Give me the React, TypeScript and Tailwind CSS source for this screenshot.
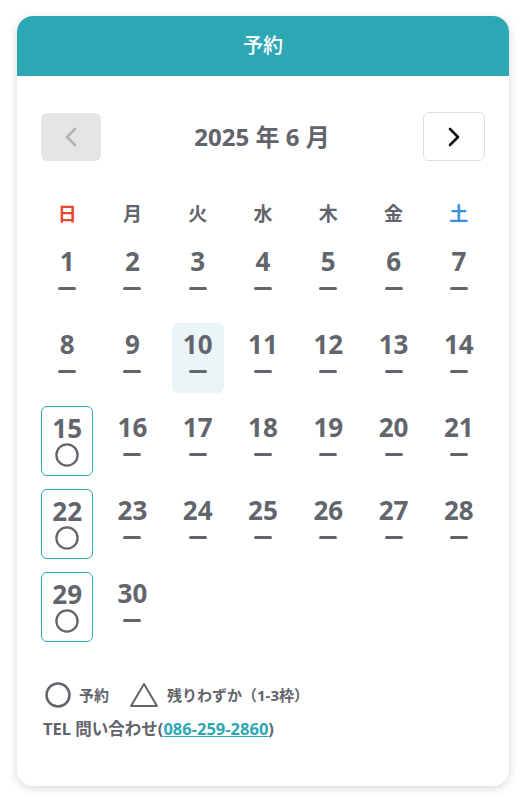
import React from 'react';

const weekdays = [
  { label: '日', color: 'text-[#e8472f]' },
  { label: '月', color: 'text-[#62646b]' },
  { label: '火', color: 'text-[#62646b]' },
  { label: '水', color: 'text-[#62646b]' },
  { label: '木', color: 'text-[#62646b]' },
  { label: '金', color: 'text-[#62646b]' },
  { label: '土', color: 'text-[#3a8fe0]' },
];

// June 2025 starts on Sunday
const days = Array.from({ length: 30 }, (_, i) => i + 1);
const available = [15, 22, 29];
const today = 10;

const Dash = () => <span className="block w-[18px] h-[3px] rounded-sm bg-[#63656c]" />;

const Circle = ({ size = 24 }: { size?: number }) => (
  <svg width={size} height={size} viewBox="0 0 24 24">
    <circle cx="12" cy="12" r="10.6" fill="none" stroke="#63656c" strokeWidth="2.3" />
  </svg>
);

const DayCell = ({ day }: { day: number }) => {
  const open = available.includes(day);
  const isToday = day === today;
  return (
    <div
      className={`flex flex-col items-center pt-2 rounded-md ${
        open ? 'border border-[#2ea7b5] rounded-[5px]' : ''
      } ${isToday ? 'bg-[#e9f5f7]' : ''}`}
    >
      <span className="text-[26px] leading-[26px] font-bold text-[#63656c]">{day}</span>
      <div className="mt-[2px] h-[24px] flex items-center justify-center">
        {open ? <Circle /> : <Dash />}
      </div>
    </div>
  );
};

export default function App() {
  return (
    <div
      className="min-h-screen bg-white pt-4 px-[17px]"
      style={{ fontFamily: '"Noto Sans", "Noto Sans CJK JP", sans-serif' }}
    >
      <div className="w-[492px] rounded-2xl bg-white shadow-[0_2px_10px_rgba(0,0,0,0.16)] overflow-hidden">
        <div className="h-[60px] bg-[#2ea7b5] flex items-center justify-center">
          <h1 className="text-white text-[20px] font-medium">予約</h1>
        </div>

        <div className="px-6 pt-9 pb-[44px]">
          <div className="flex items-center justify-between h-[49px]">
            <button className="w-[60px] h-[48px] rounded-md bg-[#e5e5e5] flex items-center justify-center">
              <svg width="12" height="20" viewBox="0 0 12 20">
                <path d="M10 2 L2 10 L10 18" fill="none" stroke="#b3b3b3" strokeWidth="2.6" strokeLinecap="round" strokeLinejoin="round" />
              </svg>
            </button>
            <div className="text-[24px] font-bold text-[#62646b]">2025 年 6 月</div>
            <button className="w-[62px] h-[49px] rounded-md bg-white border border-[#dedede] flex items-center justify-center">
              <svg width="12" height="20" viewBox="0 0 12 20">
                <path d="M2 2 L10 10 L2 18" fill="none" stroke="#111" strokeWidth="2.6" strokeLinecap="round" strokeLinejoin="round" />
              </svg>
            </button>
          </div>

          <div className="grid grid-cols-7 gap-x-[13px] mt-[38px] h-[30px] items-center">
            {weekdays.map((w) => (
              <div key={w.label} className={`text-center text-[19px] leading-[30px] font-bold ${w.color}`}>
                {w.label}
              </div>
            ))}
          </div>

          <div className="grid grid-cols-7 gap-[13px] auto-rows-[70px] mt-[11px]">
            {days.map((d) => (
              <DayCell key={d} day={d} />
            ))}
          </div>

          <div className="mt-10 pl-1 flex items-center gap-2 text-[15px] font-bold text-[#62646b]">
            <Circle size={26} />
            <span>予約</span>
            <svg width="30" height="26" viewBox="0 0 30 26" className="ml-3">
              <path d="M15 2 L28 24 L2 24 Z" fill="none" stroke="#63656c" strokeWidth="2" strokeLinejoin="round" />
            </svg>
            <span>残りわずか（1-3枠）</span>
          </div>

          <div className="mt-[9px] pl-[2px] text-[16.5px] font-bold text-[#62646b]">
            TEL 問い合わせ(
            <a href="#" className="text-[#2ea7b5] underline">086-259-2860</a>)
          </div>
        </div>
      </div>
    </div>
  );
}
